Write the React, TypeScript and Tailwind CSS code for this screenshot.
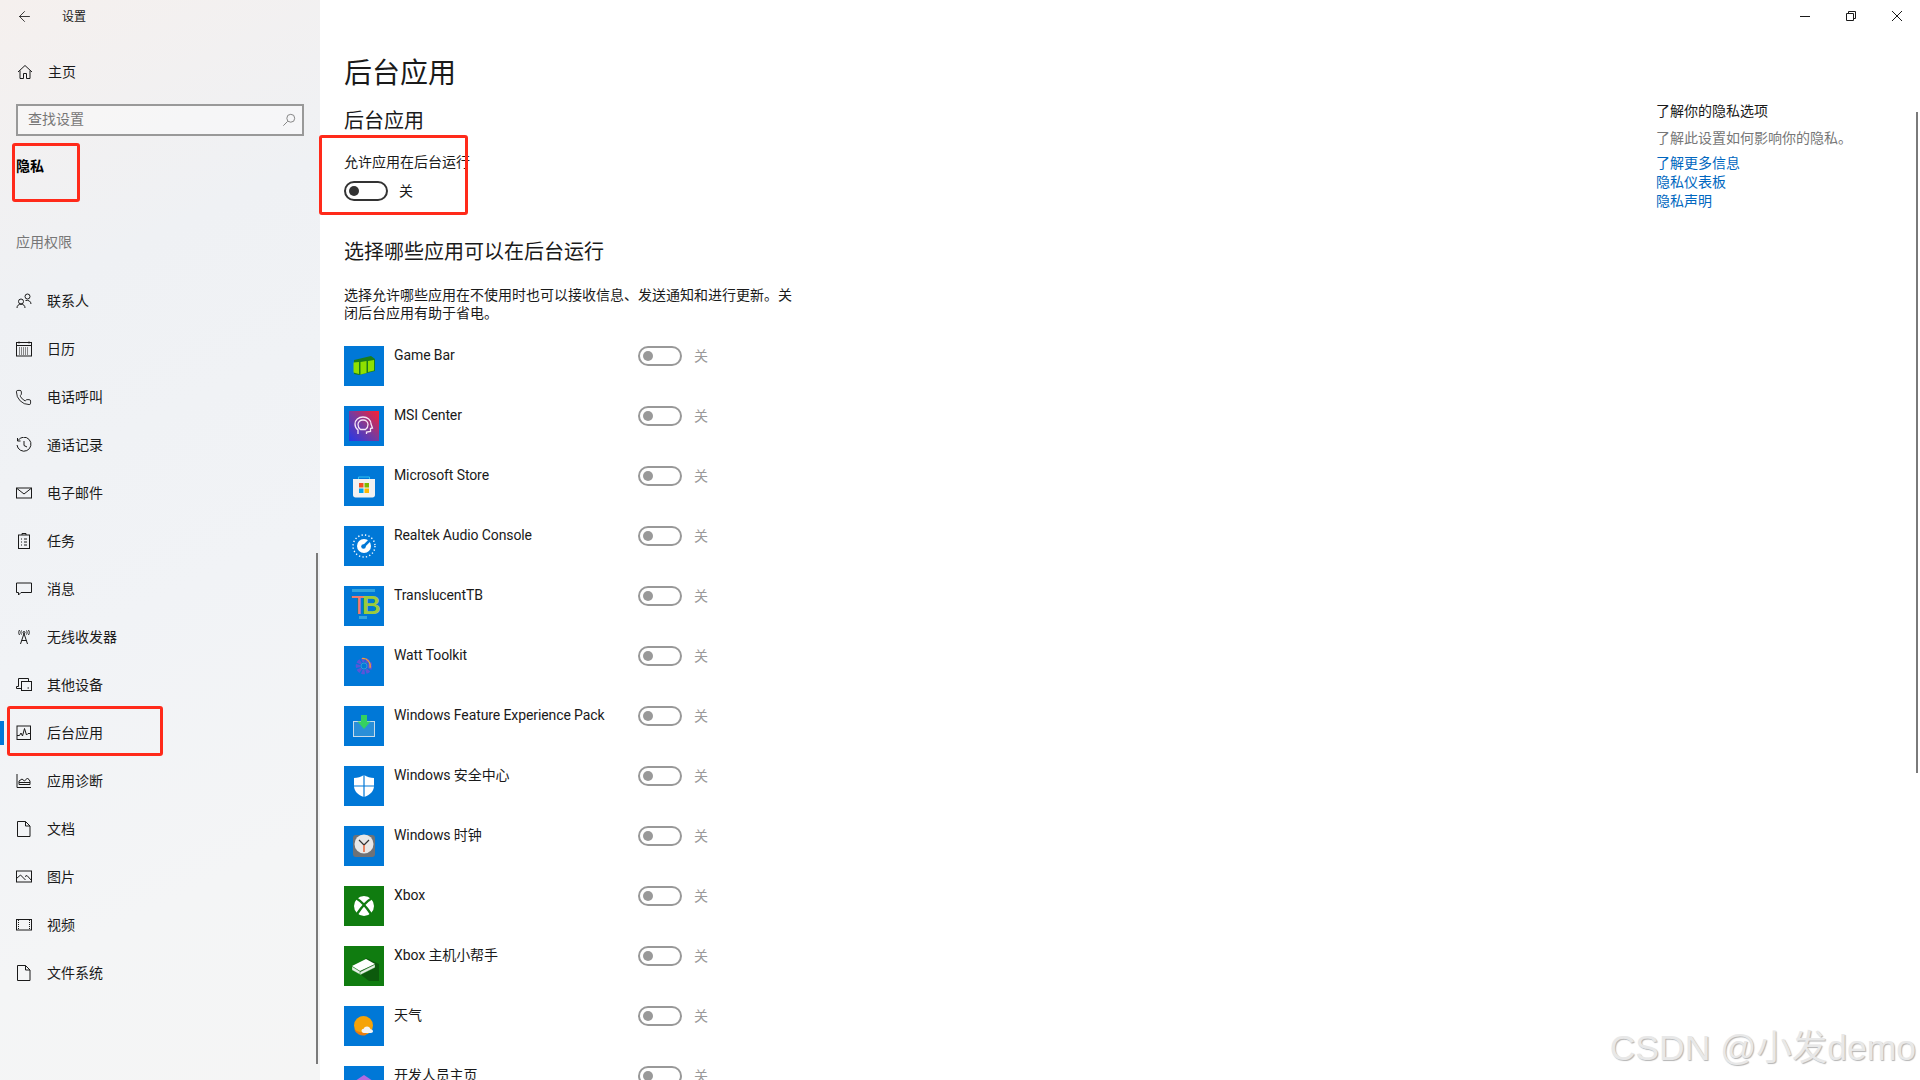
import type { ReactNode } from "react";
import { ArrowLeft, Phone } from "lucide-react";

const FONT = "font-['Roboto','Noto_Sans_CJK_SC',sans-serif]";

function Glyph({ children }: { children: ReactNode }) {
  return (
    <svg viewBox="0 0 16 16" fill="none" stroke="#1a1a1a" strokeWidth="1" className="w-4 h-4 shrink-0">
      {children}
    </svg>
  );
}

const navItems: { label: string; icon: ReactNode }[] = [
  {
    label: "联系人",
    icon: (
      <Glyph>
        <circle cx="5" cy="8.500" r="2.500" />
        <path d="M1 15c0-2.500 1.600-3.800 4-3.800S9 12.500 9 15" />
        <circle cx="11.500" cy="3.500" r="2.500" />
        <path d="M9.500 7.500c2.800-.800 5.500.800 5.500 3.500" />
      </Glyph>
    ),
  },
  {
    label: "日历",
    icon: (
      <Glyph>
        <rect x="0.500" y="1.500" width="15" height="13.500" />
        <path d="M0.500 4.500h15M3 .5v2M13 .5v2" />
        <path d="M3 7h10M3 9h10M3 11h10M3 13h10" strokeDasharray="1 1" />
      </Glyph>
    ),
  },
  { label: "电话呼叫", icon: <Phone className="w-[17px] h-[17px] shrink-0 -ml-px" strokeWidth={1.3} color="#1a1a1a" /> },
  {
    label: "通话记录",
    icon: (
      <Glyph>
        <path d="M2 3.500A7 7 0 1 1 1 8" />
        <path d="M1.500 1v3h3M8 4v4.500l3 1.500" />
      </Glyph>
    ),
  },
  {
    label: "电子邮件",
    icon: (
      <Glyph>
        <rect x="0.500" y="3" width="15" height="10" />
        <path d="M1 3.500 8 9l7-5.500" />
      </Glyph>
    ),
  },
  {
    label: "任务",
    icon: (
      <Glyph>
        <rect x="2.500" y="2" width="11" height="13.500" />
        <path d="M6 2V.5h4V2M5 6h1M8 6h3M5 9h1M8 9h3M5 12h1M8 12h3" />
      </Glyph>
    ),
  },
  {
    label: "消息",
    icon: (
      <Glyph>
        <path d="M.5 2h15v9.500H5L2.500 14v-2.500H.5z" />
      </Glyph>
    ),
  },
  {
    label: "无线收发器",
    icon: (
      <Glyph>
        <path d="M8 4.500 4.500 15M8 4.500 11.500 15M5.500 11.500h5" />
        <circle cx="8" cy="3.500" r="1" />
        <path d="M5.500 1.500c-.8 1.300-.8 2.700 0 4M10.500 1.500c.8 1.300.8 2.700 0 4M3.500 1c-1 1.700-1 3.300 0 5M12.500 1c1 1.700 1 3.300 0 5" />
      </Glyph>
    ),
  },
  {
    label: "其他设备",
    icon: (
      <Glyph>
        <path d="M12.500 4.500V1.500H2.500v8H.5v2h5" />
        <rect x="5.500" y="4.500" width="10" height="9" />
        <path d="M11.500 11h1.500" />
      </Glyph>
    ),
  },
  {
    label: "后台应用",
    icon: (
      <Glyph>
        <rect x="1" y="1" width="13.500" height="13.500" />
        <path d="M1 10.500h2.500L5 8l1.500 3L8.500 3.500 10.500 10l1.500-1.500h2.500" />
      </Glyph>
    ),
  },
  {
    label: "应用诊断",
    icon: (
      <Glyph>
        <path d="M1 1v13.500h14" />
        <path d="M3 11.500V8l3-2 2.500 2L11.500 5 14 8v3.500zM3 9.500h11" />
      </Glyph>
    ),
  },
  {
    label: "文档",
    icon: (
      <Glyph>
        <path d="M1.500.5h8L14 5v10.500H1.500z" />
        <path d="M9.500.5V5H14" />
      </Glyph>
    ),
  },
  {
    label: "图片",
    icon: (
      <Glyph>
        <rect x="0.500" y="2" width="15" height="11" />
        <path d="M.5 9.500 4.500 6l5 5M9 7.500l2-1 4.500 5" />
      </Glyph>
    ),
  },
  {
    label: "视频",
    icon: (
      <Glyph>
        <rect x="0.500" y="2.500" width="15" height="10.500" />
        <path d="M2.500 3v10M13.500 3v10" strokeDasharray="1 1" />
      </Glyph>
    ),
  },
  {
    label: "文件系统",
    icon: (
      <Glyph>
        <path d="M1.500.5h8L14 5v10.500H1.500z" />
        <path d="M9.500.5V5H14" />
      </Glyph>
    ),
  },
];

function Tile({ green, children }: { green?: boolean; children: ReactNode }) {
  return (
    <div className={`w-10 h-10 shrink-0 ${green ? "bg-[#107c10]" : "bg-[#0078d7]"}`}>
      <svg viewBox="0 0 40 40" className="w-10 h-10">
        {children}
      </svg>
    </div>
  );
}

const apps: { name: string; icon: ReactNode }[] = [
  {
    name: "Game Bar",
    icon: (
      <Tile>
        <path d="M10 14 27 10 31 13 31 25 15 29 10 28z" fill="#1a7d1a" />
        <path d="M9.500 16.500 15 16v12l-5.500-1.500zM16.500 16l6-1v12l-6 1.500zM24 15l6-1v10.500l-6 1.500z" fill="#8fe000" />
      </Tile>
    ),
  },
  {
    name: "MSI Center",
    icon: (
      <Tile>
        <defs>
          <linearGradient id="msi" x1="0" y1="1" x2="1" y2="0">
            <stop offset="0" stopColor="#2438e8" />
            <stop offset="0.5" stopColor="#7a3a9c" />
            <stop offset="1" stopColor="#ff2030" />
          </linearGradient>
        </defs>
        <rect x="5" y="5" width="30" height="30" fill="url(#msi)" />
        <path d="M14 28v-4c-2-1.500-3-3.500-3-6 0-4 3.500-7 8-7s8 3 8 7l1.500 4-2 .5v3l-4 .5v2" fill="none" stroke="#f6e6f6" strokeWidth="1.300" />
        <path d="M16.500 23.500c-1.500-1-2.500-3-2.500-5 0-2.700 2.200-4.500 5-4.500s5 1.800 5 4.500c0 2-1 4-2.500 5z" fill="none" stroke="#f6e6f6" strokeWidth="1.300" />
      </Tile>
    ),
  },
  {
    name: "Microsoft Store",
    icon: (
      <Tile>
        <path d="M14.500 13v-2h11v2" fill="none" stroke="#33c5f3" strokeWidth="1" />
        <path d="M9 13h22v16c0 1.500-1 2.500-2.500 2.500h-17C10 31.500 9 30.500 9 29z" fill="#f1f1f1" />
        <rect x="15" y="17" width="4.500" height="4.500" fill="#f25022" />
        <rect x="20.500" y="17" width="4.500" height="4.500" fill="#7fba00" />
        <rect x="15" y="22.500" width="4.500" height="4.500" fill="#00a4ef" />
        <rect x="20.500" y="22.500" width="4.500" height="4.500" fill="#ffb900" />
      </Tile>
    ),
  },
  {
    name: "Realtek Audio Console",
    icon: (
      <Tile>
        <circle cx="20" cy="20" r="11" fill="none" stroke="#fff" strokeWidth="1.400" strokeDasharray="1.300 2.200" />
        <circle cx="20" cy="20" r="7" fill="#fff" />
        <path d="M19.500 20.500 26 14" stroke="#0078d7" strokeWidth="2.500" />
        <circle cx="19.500" cy="20.500" r="2.300" fill="#0078d7" />
      </Tile>
    ),
  },
  {
    name: "TranslucentTB",
    icon: (
      <Tile>
        <rect x="8" y="3" width="23" height="3" fill="#35a5dc" />
        <text x="7" y="28" fontFamily="'Liberation Sans',sans-serif" fontSize="26">
          <tspan fill="#f0786c">T</tspan>
          <tspan dx="-5" fontWeight="700" fill="#9ccb3c">B</tspan>
        </text>
        <rect x="15" y="30" width="8" height="3" fill="#35a5dc" />
      </Tile>
    ),
  },
  {
    name: "Watt Toolkit",
    icon: (
      <Tile>
        <circle cx="20" cy="20" r="6" fill="none" stroke="#5a55d8" strokeWidth="4.500" strokeDasharray="3 1.200" />
        <path d="M18 12.500a7.500 7.500 0 0 1 8 9.500" fill="none" stroke="#f0a030" strokeWidth="1.200" />
        <circle cx="20" cy="20" r="3" fill="none" stroke="#2f9ad8" strokeWidth="1" />
      </Tile>
    ),
  },
  {
    name: "Windows Feature Experience Pack",
    icon: (
      <Tile>
        <rect x="9.500" y="15.500" width="21" height="15" fill="#2a8fd8" stroke="#c8dcea" strokeWidth="1" />
        <path d="M17 9h6v6.500h3.500L20 23l-6.500-7.500H17z" fill="#35d060" />
      </Tile>
    ),
  },
  {
    name: "Windows 安全中心",
    icon: (
      <Tile>
        <path d="M20 9c3 2 6.500 3 10 3v8c0 5-4 9-10 11-6-2-10-6-10-11v-8c3.500 0 7-1 10-3z" fill="#fff" />
        <path d="M20 9v22M10 20h20" stroke="#0078d7" strokeWidth="1.200" />
      </Tile>
    ),
  },
  {
    name: "Windows 时钟",
    icon: (
      <Tile>
        <rect x="9" y="9" width="22" height="22" rx="3" fill="#6f7276" />
        <circle cx="20" cy="18" r="9.500" fill="#e8e8e8" />
        <path d="M20 19 15 14M20 19l5-5" stroke="#333" strokeWidth="1.200" />
        <path d="M20 19v7" stroke="#e8663a" strokeWidth="1.500" />
      </Tile>
    ),
  },
  {
    name: "Xbox",
    icon: (
      <Tile green>
        <circle cx="20" cy="20" r="10" fill="#fff" />
        <path d="M12.500 12.500C17 15 23 22 27 28M27.500 12.500C23 15 17 22 13 28" fill="none" stroke="#107c10" strokeWidth="2.400" />
      </Tile>
    ),
  },
  {
    name: "Xbox 主机小帮手",
    icon: (
      <Tile green>
        <path d="M22 12 35 18v17H25L12 25z" fill="#0c5a0c" />
        <path d="M8 20 22 13l9 5-15 7z" fill="#fff" />
        <path d="M8 20.500l8 5v3l-8-4.500zM16 26l15-7.500v3L16 29z" fill="#e4efe4" stroke="#107c10" strokeWidth="0.300" />
      </Tile>
    ),
  },
  {
    name: "天气",
    icon: (
      <Tile>
        <circle cx="19.500" cy="19.500" r="9.500" fill="#f5a308" />
        <path d="M22 29a9.500 9.500 0 0 1-12-6c3 3 8 4 13 3z" fill="#e87c10" />
        <path d="M20 27c-1.500 0-2.500-1-2.500-2.200 0-1.200 1-2 2.200-2 .5-1.500 1.800-2.300 3.300-2.300 1.800 0 3.200 1.200 3.500 2.800 1.400 0 2.500.9 2.500 2 0 1-1 1.700-2 1.700z" fill="#f4f4f4" />
      </Tile>
    ),
  },
  {
    name: "开发人员主页",
    icon: (
      <Tile>
        <path d="M20 9l9 6v10l-9 6-9-6V15z" fill="#b36ae0" />
      </Tile>
    ),
  },
];

function Toggle({ muted }: { muted?: boolean }) {
  return (
    <div
      className={`w-11 h-5 shrink-0 rounded-full border-2 flex items-center pl-[3px] ${
        muted ? "border-[#999999]" : "border-[#333333]"
      }`}
    >
      <span className={`w-2.5 h-2.5 rounded-full ${muted ? "bg-[#999999]" : "bg-[#333333]"}`} />
    </div>
  );
}

// the red boxes drawn on top of the screenshot
function Mark({ className }: { className: string }) {
  return <div className={`absolute border-[3px] border-[#ff2a1a] rounded-[3px] pointer-events-none ${className}`} />;
}

export default function App() {
  return (
    <div className={`relative h-screen w-full flex overflow-hidden bg-white text-[#1a1a1a] ${FONT}`}>
      <aside className="relative w-[320px] shrink-0 h-full bg-[linear-gradient(155deg,#f5f0ee_0%,#eff1f4_25%,#f1f3f6_55%,#f4f5f6_80%,#f5f5f5_100%)]">
        <div className="h-8 flex items-center">
          <ArrowLeft className="w-[17px] h-[17px] ml-4" strokeWidth={1.2} />
          <span className="ml-[29px] text-xs leading-4 translate-y-px">设置</span>
        </div>
        <div className="mt-4 h-12 flex items-center pl-[17px]">
          <svg viewBox="0 0 16 16" fill="none" stroke="#1a1a1a" strokeWidth="1" className="w-4 h-4 shrink-0">
            <path d="M1 8 8 1.500 15 8M3 6.500V14.500h3.500V9.500h3v5H13V6.500" />
          </svg>
          <span className="ml-[15px] text-sm">主页</span>
        </div>
        <div className="mt-2 mx-4 h-8 border-2 border-[#999999] flex items-center justify-between pl-2.5 pr-1.5 bg-white/40">
          <span className="text-sm leading-5 text-[#777777] -translate-y-px">查找设置</span>
          <svg viewBox="0 0 16 16" fill="none" stroke="#777777" strokeWidth="1" className="w-3.5 h-3.5">
            <circle cx="10" cy="6" r="4.500" />
            <path d="M6.500 9.500 1.500 14.500" />
          </svg>
        </div>
        <div className="mt-5 ml-4 h-5 text-sm leading-5 font-bold text-black">隐私</div>
        <div className="mt-[56px] ml-4 h-5 text-sm leading-5 text-[#777777]">应用权限</div>
        <nav className="mt-[25px]">
          {navItems.map((item) => (
            <div key={item.label} className="relative h-12 flex items-center pl-4">
              {item.label === "后台应用" && <span className="absolute left-0 top-3 w-1 h-6 bg-[#0078d7]" />}
              {item.icon}
              <span className="ml-[15px] text-sm">{item.label}</span>
            </div>
          ))}
        </nav>
        <div className="absolute right-[2px] top-[553px] w-0.5 h-[511px] bg-[#7a7a7a]" />
        <Mark className="left-3 top-[143px] w-[68px] h-[59px]" />
        <Mark className="left-[7px] top-[706px] w-[156px] h-[50px]" />
      </aside>

      <div className="relative flex-1 min-w-0 flex flex-col h-full">
        <div className="h-8 shrink-0 flex justify-end">
          <div className="w-[46px] flex items-center justify-center">
            <svg viewBox="0 0 10 10" stroke="#1a1a1a" strokeWidth="1" className="w-2.5 h-2.5">
              <path d="M0 5.500h10" />
            </svg>
          </div>
          <div className="w-[46px] flex items-center justify-center">
            <svg viewBox="0 0 10 10" fill="none" stroke="#1a1a1a" strokeWidth="1" className="w-2.5 h-2.5">
              <path d="M.5 2.500h7v7h-7zM2.500 2.500v-2h7v7h-2" />
            </svg>
          </div>
          <div className="w-[46px] flex items-center justify-center">
            <svg viewBox="0 0 10 10" stroke="#1a1a1a" strokeWidth="1" className="w-2.5 h-2.5">
              <path d="M0 0l10 10M10 0 0 10" />
            </svg>
          </div>
        </div>

        <div className="flex flex-1 min-h-0">
          <main className="flex-1 min-w-0 pl-6 overflow-hidden">
            <h1 className="mt-[22px] text-[28px] leading-10 font-normal">后台应用</h1>
            <h2 className="mt-[13px] text-xl leading-7 font-normal">后台应用</h2>
            <div className="mt-[17px] text-sm leading-5">允许应用在后台运行</div>
            <div className="mt-[9px] flex items-center">
              <Toggle />
              <span className="ml-[11px] text-sm leading-5">关</span>
            </div>
            <h2 className="mt-[37px] text-xl leading-7 font-normal">选择哪些应用可以在后台运行</h2>
            <p className="mt-5 w-[456px] text-sm leading-[18px]">
              选择允许哪些应用在不使用时也可以接收信息、发送通知和进行更新。关闭后台应用有助于省电。
            </p>
            <div className="mt-6 flex flex-col gap-5">
              {apps.map((app) => (
                <div key={app.name} className="flex items-start h-10 shrink-0">
                  {app.icon}
                  <span className="ml-2.5 w-[244px] shrink-0 text-sm leading-[18px] tracking-[-0.1px]">{app.name}</span>
                  <Toggle muted />
                  <span className="ml-3 text-sm leading-5 text-[#999999]">关</span>
                </div>
              ))}
            </div>
          </main>

          <aside className="w-[264px] shrink-0 pt-[69px] text-sm">
            <div className="leading-5">了解你的隐私选项</div>
            <div className="mt-[7px] leading-5 text-[#777777]">了解此设置如何影响你的隐私。</div>
            <div className="mt-1.5 leading-[19px] text-[#0067c0]">
              <div>了解更多信息</div>
              <div>隐私仪表板</div>
              <div>隐私声明</div>
            </div>
          </aside>
        </div>

        <div className="absolute right-[2px] top-[112px] w-0.5 h-[661px] bg-[#7a7a7a]" />
        <Mark className="-left-px top-[135px] w-[149px] h-[80px]" />
      </div>

      <div className="absolute right-1 bottom-[12px] font-['Liberation_Sans','Noto_Sans_CJK_SC',sans-serif] text-[35.5px] leading-10 text-[#e8e8e8] [text-shadow:1px_1px_1px_#b4b4b4] pointer-events-none">
        CSDN @小发demo
      </div>
    </div>
  );
}
